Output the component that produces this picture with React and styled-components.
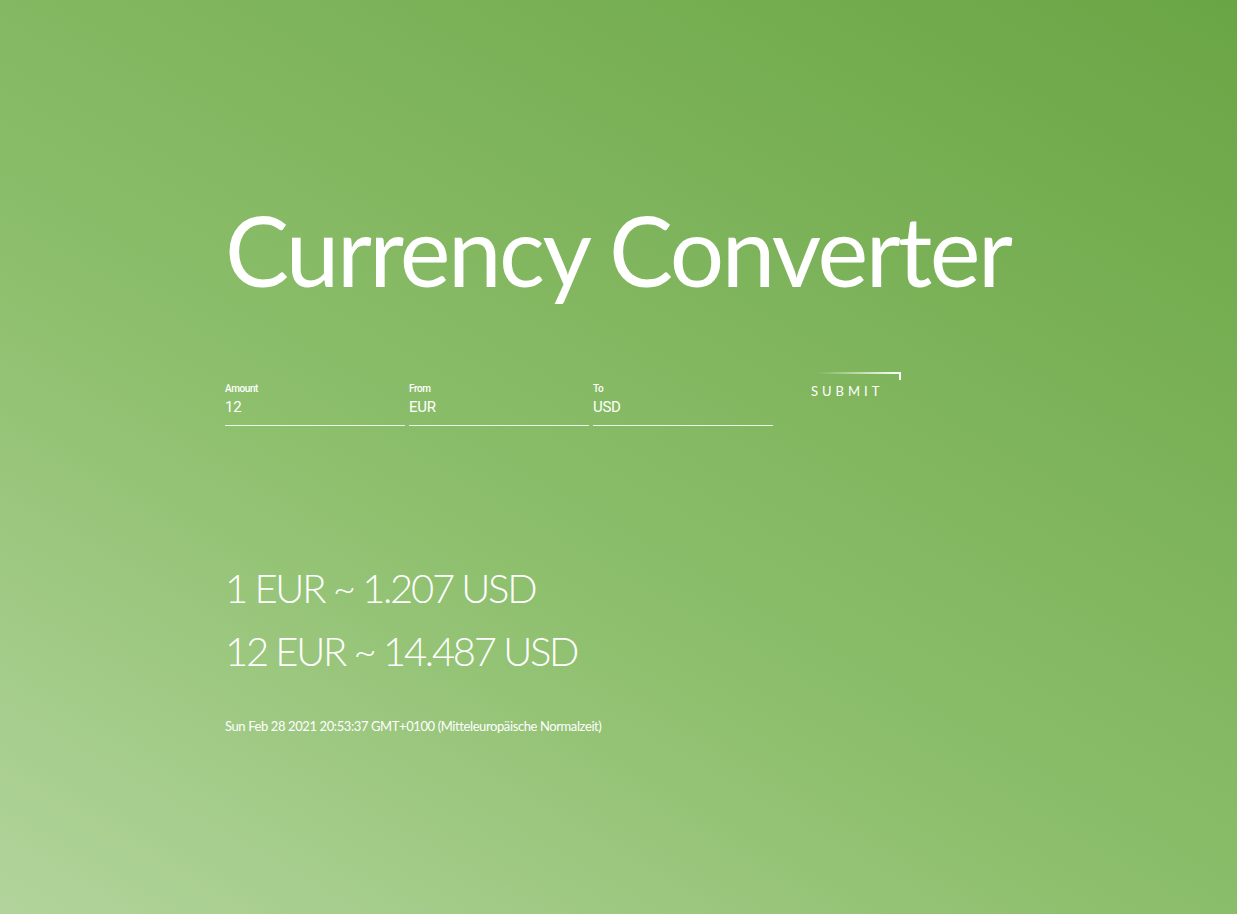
import React from "react";
import styled, { createGlobalStyle } from "styled-components";

const Global = createGlobalStyle`
  html, body { margin: 0; padding: 0; }
  body { font-family: "Lato", "Open Sans", sans-serif; color: #fff; }
`;

const Page = styled.div`
  width: 1237px;
  height: 914px;
  background: linear-gradient(30deg, #b2d49c 0%, #8dbf6c 40%, #6aa545 100%);
  padding: 190px 0 0 225px;
  box-sizing: border-box;
  overflow: hidden;
`;

const Title = styled.h1`
  margin: 0;
  font-family: "Lato", sans-serif;
  font-weight: 400;
  font-size: 96px;
  line-height: 120px;
  letter-spacing: -2.5px;
  color: #fff;
`;

const Form = styled.form`
  display: flex;
  align-items: flex-start;
  gap: 4px;
  margin-top: 73px;
`;

const Field = styled.label`
  display: flex;
  flex-direction: column;
  width: 180px;
  border-bottom: 1px solid rgba(255, 255, 255, 0.85);
  padding-bottom: 9px;
`;

const Label = styled.span`
  font-family: "Roboto", sans-serif;
  font-size: 10px;
  font-weight: 500;
  letter-spacing: -0.4px;
  line-height: 12px;
`;

const Value = styled.span`
  font-family: "Roboto", sans-serif;
  font-size: 15px;
  letter-spacing: -0.3px;
  line-height: 18px;
  margin-top: 3px;
`;

const Submit = styled.button`
  position: relative;
  margin: -11px 0 0 31px;
  background: none;
  border: none;
  color: #fff;
  font-family: "Lato", sans-serif;
  font-size: 13px;
  letter-spacing: 4px;
  padding: 11px 0 0 3px;
  width: 93px;
  text-align: left;
  cursor: pointer;
  &::before {
    content: "";
    position: absolute;
    top: 0;
    left: 8px;
    right: 0;
    height: 2px;
    background: linear-gradient(90deg, rgba(255,255,255,0), #fff);
  }
  &::after {
    content: "";
    position: absolute;
    top: 0;
    right: 0;
    width: 2px;
    height: 8px;
    background: #fff;
  }
`;

const Results = styled.div`
  margin-top: 131px;
`;

const Rate = styled.p`
  margin: 0;
  font-family: "Lato", sans-serif;
  font-weight: 300;
  font-size: 40px;
  line-height: 63px;
  letter-spacing: -2.3px;
`;

const DateLine = styled.p`
  margin: 35px 0 0;
  font-family: "Lato", sans-serif;
  font-size: 13px;
  letter-spacing: -0.4px;
`;

export default function App() {
  return (
    <>
      <Global />
      <Page>
        <Title>Currency Converter</Title>
        <Form onSubmit={(e) => e.preventDefault()}>
          <Field>
            <Label>Amount</Label>
            <Value>12</Value>
          </Field>
          <Field>
            <Label>From</Label>
            <Value>EUR</Value>
          </Field>
          <Field>
            <Label>To</Label>
            <Value>USD</Value>
          </Field>
          <Submit type="submit">SUBMIT</Submit>
        </Form>
        <Results>
          <Rate>1 EUR ~ 1.207 USD</Rate>
          <Rate>12 EUR ~ 14.487 USD</Rate>
          <DateLine>Sun Feb 28 2021 20:53:37 GMT+0100 (Mitteleuropäische Normalzeit)</DateLine>
        </Results>
      </Page>
    </>
  );
}
